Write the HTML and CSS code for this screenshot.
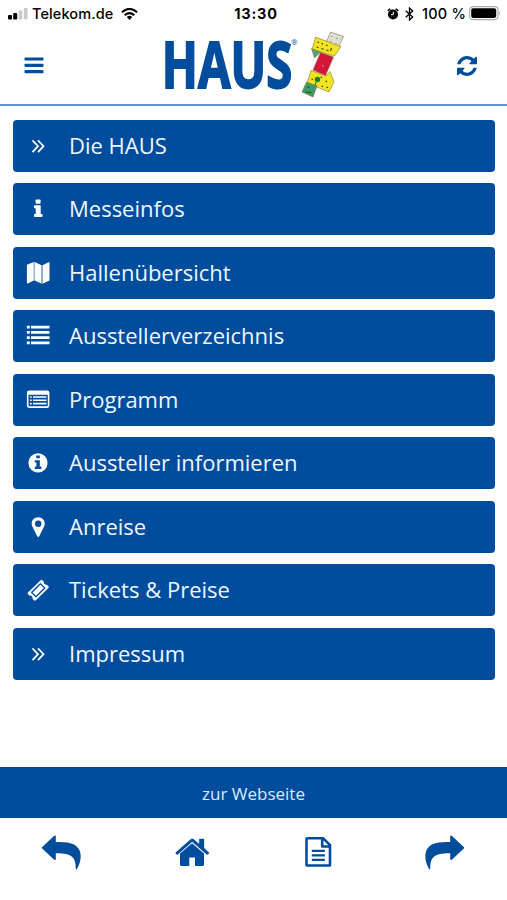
FILE: index.html
```
<!DOCTYPE html>
<html lang="de">
<head>
<meta charset="utf-8">
<title>HAUS</title>
<link rel="stylesheet" href="styles.css">
</head>
<body>
<div class="status">
  <div class="carrier">
    <svg width="20" height="14" viewBox="0 0 20 14"><rect x="0" y="8" width="4" height="4.500" rx="1"/><rect x="5.2" y="6" width="4" height="6.500" rx="1"/><g fill="#c9c9c9"><rect x="10.6" y="3.500" width="3.800" height="9" rx="1"/><rect x="15.800" y="1" width="3.800" height="11.500" rx="1"/></g></svg>
    <span class="operator">Telekom.de</span>
    <svg width="17" height="13" viewBox="0 0 17 13" fill="none" stroke="#000" stroke-width="2.1"><path d="M.9 4.300Q8.500-2.500 16.100 4.300M3.700 7.200Q8.500 3 13.300 7.200"/><path d="M5.800 8.900Q8.500 6.800 11.200 8.900L8.500 11.900Z" fill="#000" stroke="none"/></svg>
  </div>
  <div class="clock">13:30</div>
  <div class="power">
    <svg width="12" height="13" viewBox="0 0 12 13"><circle cx="6" cy="6.500" r="5"/><path d="M.8 2.900L3.300.7M8.700.7l2.500 2.200" stroke="#000" stroke-width="1.500"/><path d="M6.300 3.700v3H3.900" fill="none" stroke="#fff" stroke-width="1"/></svg>
    <svg class="bluetooth" width="9" height="14" viewBox="0 0 9 14" fill="none" stroke="#000" stroke-width="1.300"><path d="M.7 3.700L7.700 10 4.500 13V1l3.200 3L.7 10.300"/></svg>
    <span class="percent">100 %</span>
    <svg class="battery" width="32" height="15" viewBox="0 0 32 15"><rect x=".6" y=".6" width="28.400" height="13" rx="3.500" fill="#fff" stroke="#a9a9a9" stroke-width="1.100"/><rect x="2.200" y="2.300" width="25" height="9.600" rx="1.800"/><path d="M30 5q1.800 2 0 4.400z" fill="#999"/></svg>
  </div>
</div>
<header class="header">
  <button class="tool"><svg width="20" height="18" viewBox="0 0 20 18"><rect x=".5" y=".5" width="19" height="3.100" rx=".8"/><rect x=".5" y="6.800" width="19" height="3.100" rx=".8"/><rect x=".5" y="13.100" width="19" height="3.100" rx=".8"/></svg></button>
  <svg class="logo" width="184" height="76" viewBox="160 28 184 76">
    <text class="brand" x="160.800" y="87.500" textLength="130.500" lengthAdjust="spacingAndGlyphs">HAUS</text>
    <text class="mark" x="290" y="44.500">®</text>
    <g transform="translate(-.5 0)">
    <g stroke="#77764b" stroke-width=".6" stroke-linejoin="round">
      <path d="M330 32L343 36.500 337.500 48.500 325 44Z" fill="#deded3"/>
      <path d="M315 37L336 45 340.500 46.500 334 56 311.500 49.500Z" fill="#f2e321"/>
      <path d="M311 48.500L320 52 314 58Z" fill="#5b9e72"/>
      <path d="M320 52.500L333 57 325 75.500 312.500 70Z" fill="#d41638"/>
      <path d="M310.500 70.500L325.500 76 329.500 71.500 333.500 82 328.500 92 306.500 83Z" fill="#f2e321"/>
      <path d="M306 82L316.500 86 312.500 97 301.500 92Z" fill="#3f9b68"/>
    </g>
    <path d="M317 42l1.500.6M321 43.500l1.500.6M325.500 45l1.500.6M316 47l2 .7M321 48.500l2 .7M326 50l2 .7M331 48l-1 3M321 86l1.500.6M325 81l1.500.6M326 87l1.500.6M311 79l1.500.6M320 77l1.500.6M307 87l2 .8M305 92l6 .5" stroke="#3e431d" stroke-width="1.200"/>
    <path d="M331 36l1 1M336 38l1 1M330 41l1 1M335 43l1 1" stroke="#a56868"/>
    <path d="M321.500 65.500l1.600.5" stroke="#efa1a8"/>
    <circle cx="317" cy="79.500" r="2.700" fill="#287a31"/><path d="M315.500 82l-1 3.500" stroke="#315f20"/>
    </g>
  </svg>
  <button class="tool"><svg width="20" height="20" viewBox="0 0 1536 1536"><path d="M1511 928q0 5-1 7-64 268-268 434.500t-478 166.500q-146 0-282.500-55t-243.500-157l-129 129q-19 19-45 19t-45-19-19-45v-448q0-26 19-45t45-19h448q26 0 45 19t19 45-19 45l-137 137q71 66 161 102t187 36q134 0 250-65t186-179q11-17 53-117 8-23 30-23h192q13 0 22.500 9.500t9.500 22.500zm25-800v448q0 26-19 45t-45 19h-448q-26 0-45-19t-19-45 19-45l138-138q-148-137-349-137-134 0-250 65t-186 179q-11 17-53 117-8 23-30 23h-199q-13 0-22.500-9.500t-9.500-22.500v-7q65-268 270-434.500t480-166.500q146 0 284 55.500t245 156.500l130-129q19-19 45-19t45 19 19 45z"/></svg></button>
</header>
<nav class="menu">
  <a class="item"><svg class="icon" viewBox="0 0 30 30"><path class="line" d="M9.500 9.300l5.500 5.900-5.500 5.900M15 9.300l5.500 5.900-5.500 5.900"/></svg><span>Die HAUS</span></a>
  <a class="item"><svg class="icon" viewBox="0 0 30 30"><rect x="12.600" y="5.400" width="5" height="4.300" rx=".9"/><path d="M11.700 11.200h5.300q.7 0 .7.700v8h1q.8 0 .8.800v1.500q0 .8-.8.800h-7q-.7 0-.7-.8v-1.500q0-.8.700-.8h1v-5.600h-1q-.7 0-.7-.8v-1.500q0-.8.700-.8z"/></svg><span>Messeinfos</span></a>
  <a class="item"><svg class="icon" viewBox="0 0 30 30"><path d="M3.900 6.800L10.800 4v18.600L4.700 25.500q-.8.300-.8-.5zM11.700 4l6.900 3.200v18.600l-6.900-3.200zM19.500 7.200l6.100-2.900q.9-.3.900.6v17.700l-7 3.200z"/><path d="M11 4h1v18.600h-1zM18.500 7h1v18.800h-1z" fill="#8fb1da"/></svg><span>Hallenübersicht</span></a>
  <a class="item"><svg class="icon" viewBox="0 0 30 30"><path d="M3.800 4.800h3v2.800h-3zM8 4.800h18.500v2.800H8zM3.800 10h3v2.800h-3zM8 10h18.500v2.800H8zM3.800 15.300h3v2.800h-3zM8 15.300h18.500v2.800H8zM3.800 20.500h3v2.800h-3zM8 20.500h18.500v2.800H8z"/></svg><span>Ausstellerverzeichnis</span></a>
  <a class="item"><svg class="icon" viewBox="0 0 30 30"><path fill-rule="evenodd" d="M6.200 5.500h17.900q2.300 0 2.300 2.300v12.800q0 2.300-2.300 2.300H6.200q-2.300 0-2.300-2.300V7.800q0-2.300 2.300-2.300zM5.500 9.800v10.400q0 1.100 1.100 1.100h17.100q1.100 0 1.100-1.100V9.800z"/><path d="M7 11.200h1.700v1.600H7zM10 11.200h13.400v1.600H10zM7 14.500h1.700v1.600H7zM10 14.500h13.400v1.600H10zM7 17.800h1.700v1.600H7zM10 17.800h13.400v1.600H10z"/></svg><span>Programm</span></a>
  <a class="item"><svg class="icon" viewBox="0 0 30 30"><circle cx="15" cy="14.900" r="9.600"/><path fill="#004d9d" d="M13.300 7.500h3.500v2.700h-3.500zM11.800 12.200h5v6.300h1.600v2.400h-6.600v-2.400h1.600v-3.900h-1.600z"/></svg><span>Aussteller informieren</span></a>
  <a class="item"><svg class="icon" viewBox="0 0 30 30"><path fill-rule="evenodd" d="M15.200 5.300c3.700 0 6.500 2.800 6.500 6.300 0 1.500-.4 2.500-1 3.700l-4.300 8.800q-1.200 1.800-2.400 0l-4.300-8.800c-.6-1.200-1-2.200-1-3.700 0-3.500 2.800-6.300 6.500-6.300zm0 3.200a3.200 3.200 0 100 6.400 3.200 3.200 0 000-6.400z"/></svg><span>Anreise</span></a>
  <a class="item"><svg class="icon" viewBox="0 0 30 30"><path fill-rule="evenodd" d="M17.600 5.200q.9-.9 1.800 0l1.500 1.500a2.400 2.400 0 003 3l1.500 1.500q.8.800 0 1.700L12.800 25.200q-.9.900-1.800 0l-1.500-1.500a2.400 2.400 0 00-3-3L5 19.200q-.8-.8 0-1.700zM18 8.400q-.7-.6-1.300 0L8.300 16.700q-.6.700 0 1.300l4.100 4.100q.6.600 1.300 0l8.400-8.400q.6-.6 0-1.300z"/><path d="M17.400 9.700l3.400 3.400-7.800 7.700-3.400-3.400z"/></svg><span>Tickets &amp; Preise</span></a>
  <a class="item"><svg class="icon" viewBox="0 0 30 30"><path class="line" d="M9.500 9.300l5.500 5.900-5.500 5.900M15 9.300l5.500 5.900-5.500 5.900"/></svg><span>Impressum</span></a>
</nav>
<a class="website">zur Webseite</a>
<footer class="toolbar">
  <svg width="40" height="36" viewBox="41 833 40 36"><path id="arrow" d="M42.200 846L54.300 834.700Q55.800 833.800 55.800 835.500V841C70 840.500 77 843 79.800 850Q82.500 858 76.800 868.300 75.900 868.800 75.800 867.500C75.800 855.500 71 852 55.800 852.200V858Q55.600 859.800 54.200 858.700L42.200 847.500Q41.500 846.700 42.200 846Z"/></svg>
  <svg width="36" height="30" viewBox="174 837 36 30"><path d="M180 853.500L192 843.300 204 853.500V864.500Q204 866 202.600 866H195V857.500H189.300V866H181.500Q180 866 180 864.500Z"/><path stroke="#fff" stroke-width=".7" d="M175.400 852.300L190.600 838.900Q192.200 837.700 193.800 838.900L198.800 843.200V839.300Q198.800 838.400 199.700 838.400H203.700Q204.500 838.400 204.500 839.300V848L209.100 852.200Q209.700 852.900 209.100 853.500L208 854.700Q207.300 855.300 206.500 854.700L192.200 842.200 178 854.700Q177.200 855.300 176.500 854.700L175.400 853.500Q174.800 852.900 175.400 852.300Z"/></svg>
  <svg width="28" height="32" viewBox="304 835.500 28 32"><path fill="none" stroke="#004d9d" stroke-width="2.600" stroke-linejoin="round" d="M307 837.700H323L330 844.700V864.800Q330 865 329.500 865H307Q306.500 865 306.500 864.500V838Q306.500 837.700 307 837.700ZM322.200 838V846H330"/><path d="M311.800 849.300h13v2.200h-13zM311.800 853.700h13v2.200h-13zM311.800 858.200h13v2.200h-13z"/></svg>
  <svg width="40" height="36" viewBox="41 833 40 36"><use href="#arrow" transform="translate(122 0) scale(-1 1)"/></svg>
</footer>
</body>
</html>
```
FILE: styles.css
```
* { box-sizing: border-box; }
body {
  margin: 0;
  width: 507px;
  height: 900px;
  overflow: hidden;
  display: flex;
  flex-direction: column;
  background: #fff;
  color: #000;
  font-family: "Open Sans", "Noto Sans", sans-serif;
}
svg { display: block; flex: none; }
.status {
  height: 28px;
  display: grid;
  grid-template-columns: 1fr auto 1fr;
  align-items: center;
  padding: 0 6px 0 8px;
  font: 500 14.5px/28px Inter, "Liberation Sans", sans-serif;
  white-space: nowrap;
}
.carrier, .power { display: flex; align-items: center; }
.operator { margin: 0 8px 0 4px; letter-spacing: .1px; }
.clock { font-weight: 700; letter-spacing: .8px; padding-left: 3px; }
.power { justify-content: flex-end; }
.bluetooth { margin: 0 8px 0 6px; }
.percent { margin-right: 3px; font-size: 14.5px; letter-spacing: .2px; }
.battery { margin-top: -1px; }
.header {
  height: 78px;
  border-bottom: 2px solid #6794c6;
  display: flex;
  justify-content: space-between;
  padding: 0 30px 0 24px;
  fill: #004d9d;
}
.tool {
  width: 20px;
  padding: 0;
  border: 0;
  background: none;
  fill: #004d9d;
}
.tool svg { margin-top: -1px; }
.logo { margin-left: 4px; overflow: visible; }
.brand { font-size: 64px; font-weight: 700; stroke: #004d9d; stroke-width: 1.9px; }
.mark { font-size: 8px; }
.menu {
  padding: 13.6px 12.5px 0 13px;
  display: grid;
  gap: 11.5px;
}
.item {
  height: 52px;
  display: flex;
  align-items: center;
  gap: 16px;
  padding-left: 10px;
  border-radius: 4px;
  background: #004d9d;
  color: #eef6ff;
  font-size: 22px;
  line-height: 50px;
}
.item span { height: 52px; }
.icon { width: 30px; height: 30px; fill: #fff; }
.line { fill: none; stroke: #fff; stroke-width: 1.7px; }
.website {
  height: 51px;
  margin-top: auto;
  background: #004d9d;
  color: #dceaff;
  text-align: center;
  font-size: 17px;
  line-height: 54px;
}
.toolbar {
  height: 82px;
  padding: 0 42px 14px 41px;
  display: flex;
  align-items: center;
  justify-content: space-between;
  fill: #004d9d;
}
```
